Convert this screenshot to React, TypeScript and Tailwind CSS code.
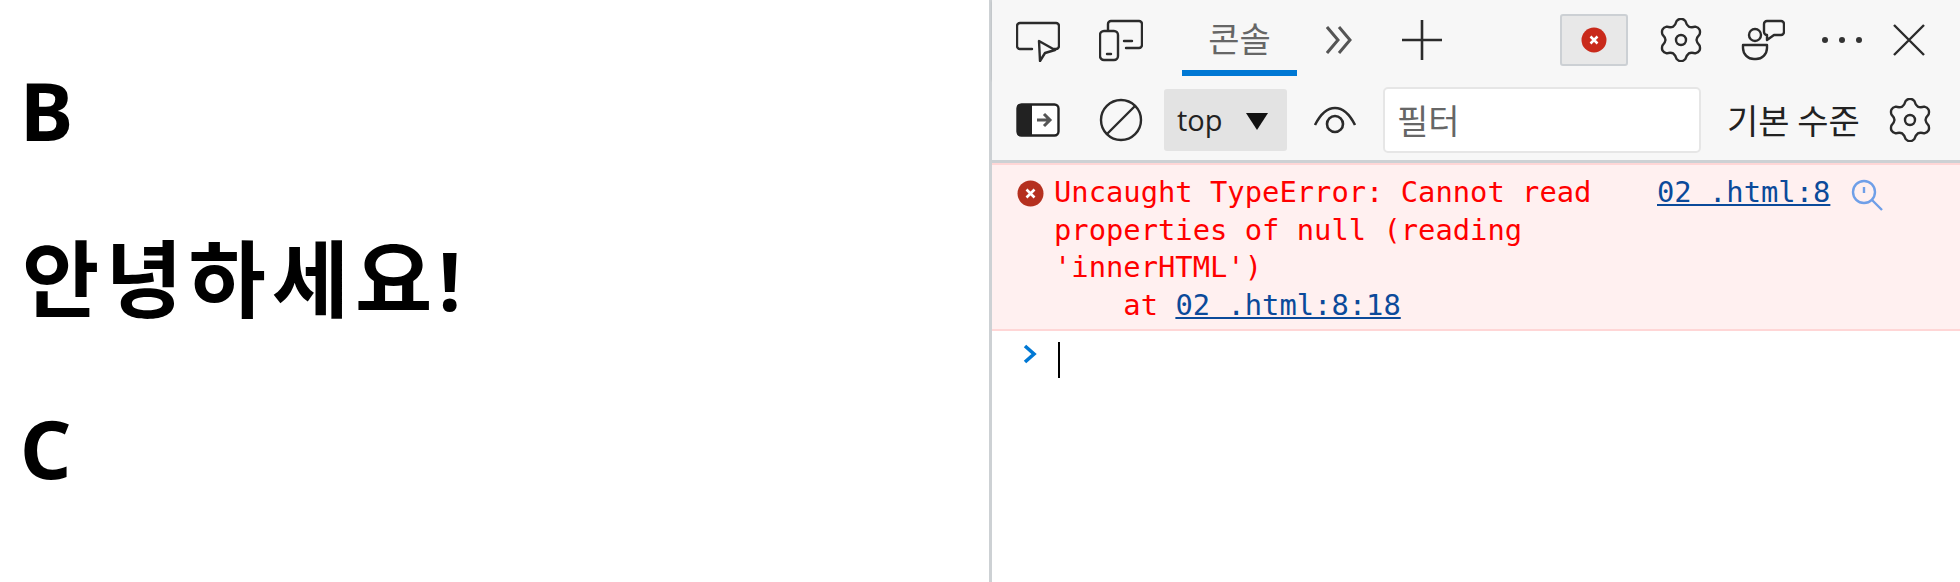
const sans = 'font-["Noto_Sans_CJK_KR",sans-serif]'

function Icon({ children }: { children: React.ReactNode }) {
  return (
    <svg width="44" height="44" viewBox="0 0 44 44" fill="none" stroke="#2b2b2b" strokeWidth="2.4" strokeLinecap="round" strokeLinejoin="round" className="block shrink-0">
      {children}
    </svg>
  )
}

// six rounded teeth, one pointing straight up
function gearPath() {
  const pt = (deg: number, r: number) => {
    const a = (deg * Math.PI) / 180
    return `${(22 + r * Math.cos(a)).toFixed(2)} ${(22 + r * Math.sin(a)).toFixed(2)}`
  }
  let d = `M${pt(-120, 15.5)}`
  for (let k = 0; k < 6; k++) {
    const a = -90 + k * 60
    d += `Q${pt(a - 20, 16)} ${pt(a - 13, 19.5)}Q${pt(a, 23.5)} ${pt(a + 13, 19.5)}Q${pt(a + 20, 16)} ${pt(a + 30, 15.5)}`
  }
  return d + 'Z'
}

function Gear() {
  return (
    <Icon>
      <path d={gearPath()} />
      <circle cx="22" cy="22" r="5" />
    </Icon>
  )
}

function TopBar() {
  return (
    <div className="flex h-[80px] items-center bg-[#f7f7f7] pl-[24px] shadow-[0_1px_2px_rgba(0,0,0,0.12)]">
      <Icon>
        <path d="M16 31H4a3 3 0 0 1-3-3V8a3 3 0 0 1 3-3h36a3 3 0 0 1 3 3v20a3 3 0 0 1-3 3h-2" />
        <path d="M23 23l1 20 5-8 10-3z" />
      </Icon>
      <div className="ml-[39px]">
        <Icon>
          <path d="M9 12V6a3 3 0 0 1 3-3h28a3 3 0 0 1 3 3v21a3 3 0 0 1-3 3H27" />
          <rect x="1" y="13" width="18" height="29" rx="4" />
          <path d="M8 36h4M25 23h8" />
        </Icon>
      </div>
      <div className={`mb-[3px] ml-[39px] flex h-[74px] w-[115px] items-center justify-center border-b-[6px] border-[#0078d4] pt-[3px] text-[34px] text-[#666] ${sans}`}>콘솔</div>
      <div className="ml-[29px]">
        <svg width="26" height="32" viewBox="0 0 26 32" fill="none" stroke="#555" strokeWidth="3" className="block">
          <path d="M1 3l11 13L1 29M13 3l11 13-11 13" />
        </svg>
      </div>
      <div className="ml-[50px]">
        <svg width="40" height="40" viewBox="0 0 40 40" fill="none" stroke="#2b2b2b" strokeWidth="2.6" className="block">
          <path d="M20 0v40M0 20h40" />
        </svg>
      </div>
      <div className="ml-[118px] flex h-[52px] w-[68px] items-center justify-center rounded-[3px] border-2 border-[#ccd0d4] bg-[#e8e8e8]">
        <svg width="26" height="26" viewBox="0 0 26 26" className="block">
          <circle cx="13" cy="13" r="12.500" fill="#c92a1b" />
          <path d="M9.500 9.500l7 7M16.500 9.500l-7 7" stroke="#fff" strokeWidth="2.500" />
        </svg>
      </div>
      <div className="ml-[31px]"><Gear /></div>
      <div className="ml-[38px]">
        <Icon>
          <circle cx="14" cy="17" r="6" />
          <path d="M2 27h24v3a11 11 0 0 1-11 11h-2A11 11 0 0 1 2 30z" />
          <path d="M26 3h14a3 3 0 0 1 3 3v8a3 3 0 0 1-3 3h-7l-7 5v-5a3 3 0 0 1-3-3V6a3 3 0 0 1 3-3z" />
        </Icon>
      </div>
      <div className="ml-[37px] flex w-[40px] justify-between">
        <span className="size-[6px] rounded-full bg-[#333]" />
        <span className="size-[6px] rounded-full bg-[#333]" />
        <span className="size-[6px] rounded-full bg-[#333]" />
      </div>
      <div className="ml-[31px]">
        <svg width="32" height="32" viewBox="0 0 32 32" fill="none" stroke="#2b2b2b" strokeWidth="2.400" className="block">
          <path d="M1 1l30 30M31 1L1 31" />
        </svg>
      </div>
    </div>
  )
}

function FilterBar() {
  return (
    <div className="flex h-[83px] items-center border-b-[3px] border-[#cdd1d4] bg-[#f7f7f7] pb-[1px] pl-[24px]">
      <svg width="44" height="34" viewBox="0 0 44 34" className="block shrink-0">
        <rect x="1.500" y="1.500" width="41" height="31" rx="4" fill="#fff" stroke="#222" strokeWidth="2.400" />
        <path d="M4 1h12v32H4a3 3 0 0 1-3-3V4a3 3 0 0 1 3-3z" fill="#222" />
        <path d="M21 17h12M28 11l6 6-6 6" fill="none" stroke="#555" strokeWidth="3" />
      </svg>
      <div className="ml-[39px]">
        <Icon>
          <circle cx="22" cy="22" r="20" />
          <path d="M36 8L8 36" />
        </Icon>
      </div>
      <div className="ml-[21px] flex h-[62px] w-[123px] items-center rounded-[3px] bg-[#e3e3e3] pl-[13px]">
        <span className="font-['Open_Sans',sans-serif] text-[29px] leading-none text-[#222]">top</span>
        <svg width="22" height="17" viewBox="0 0 22 17" className="mt-[4px] ml-[23px] block">
          <path d="M0 0h22L11 17z" fill="#111" />
        </svg>
      </div>
      <div className="ml-[26px]">
        <svg width="44" height="30" viewBox="0 0 44 30" fill="none" stroke="#2b2b2b" strokeWidth="2.600" className="block">
          <path d="M2 20C8 8 15 3 22 3s14 5 20 17" />
          <circle cx="22" cy="19" r="8" />
        </svg>
      </div>
      <div className={`ml-[26px] flex h-[66px] w-[318px] items-center rounded-[5px] border-2 border-[#e6e6e6] bg-white pl-[12px] text-[34px] text-[#666] ${sans}`}>필터</div>
      <div className={`ml-[26px] whitespace-nowrap text-[34px] text-[#222] ${sans}`}>기본 수준</div>
      <div className="ml-[28px]"><Gear /></div>
    </div>
  )
}

function ErrorRow() {
  const mono = "font-['DejaVu_Sans_Mono',monospace] text-[28.800px] leading-[37.500px]"
  return (
    <div className="flex h-[168px] border-y-2 border-[#ffd6d6] bg-[#fff0f0] pl-[25px] pt-[9px]">
      <svg width="27" height="27" viewBox="0 0 27 27" className="mt-[6px] block shrink-0">
        <circle cx="13.500" cy="13.500" r="13" fill="#b5301f" />
        <path d="M9.500 9.500l8 8M17.500 9.500l-8 8" stroke="#fff" strokeWidth="2.600" />
      </svg>
      <div className={`ml-[10px] w-[603px] whitespace-pre text-[#ff0000] ${mono}`}>
        <div>Uncaught TypeError: Cannot read</div>
        <div>properties of null (reading</div>
        <div>'innerHTML')</div>
        <div className="flex">
          <span>{'    at '}</span>
          <span className="text-[#0b4a9a] underline">02 .html:8:18</span>
        </div>
      </div>
      <span className={`text-[#0b4a9a] underline whitespace-pre ${mono}`}>02 .html:8</span>
      <svg width="32" height="32" viewBox="0 0 32 32" fill="none" stroke="#6f9fe8" strokeWidth="2.400" className="ml-[21px] mt-[5px] block shrink-0">
        <circle cx="13" cy="13" r="11" />
        <path d="M21 21l10 10M13 8v6" />
      </svg>
    </div>
  )
}

export default function App() {
  return (
    <div className="flex h-[582px] w-[1960px] overflow-hidden bg-white">
      <div className="w-[989px] shrink-0 pl-[20px] pt-[25px] font-['Noto_Sans','Noto_Sans_CJK_KR',sans-serif] text-[80px] font-bold leading-[169px] text-black">
        <h1 className="h-[169px] leading-[169px]">B</h1>
        <h1 className="h-[169px] pl-[2px] leading-[169px]"><span className="text-[84px] tracking-[6px]">안녕하세요</span>!</h1>
        <h1 className="h-[169px] leading-[169px]">C</h1>
      </div>
      <div className="flex w-[971px] shrink-0 flex-col border-l-[3px] border-[#cdd1d4]">
        <TopBar />
        <FilterBar />
        <ErrorRow />
        <div className="flex items-start pl-[31px] pt-[11px]">
          <svg width="14" height="20" viewBox="0 0 14 20" fill="none" stroke="#0078d4" strokeWidth="3.600" className="mt-[2px] block">
            <path d="M2 2l9 8-9 8" />
          </svg>
          <div className="ml-[21px] h-[36px] w-[2px] bg-black" />
        </div>
      </div>
    </div>
  )
}
